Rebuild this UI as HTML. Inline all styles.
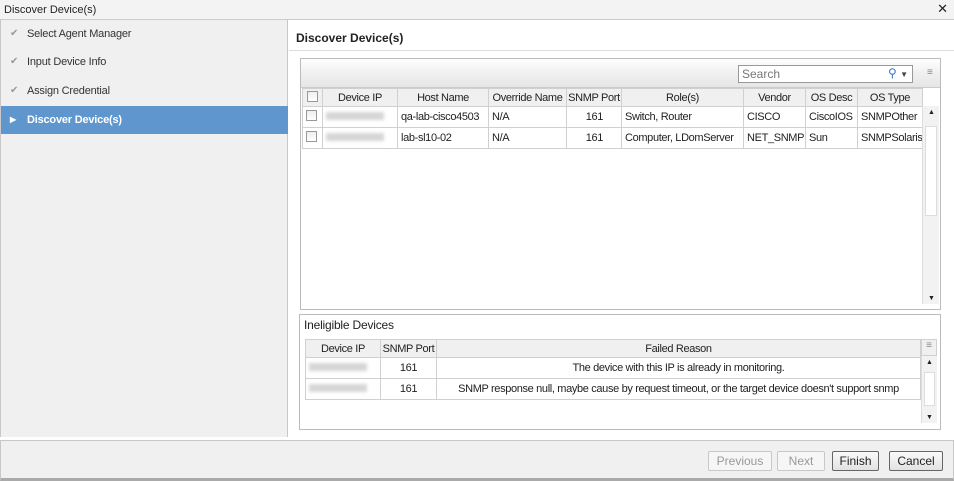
<!DOCTYPE html>
<html><head><style>
*{box-sizing:border-box;margin:0;padding:0}
body{width:954px;height:481px;position:relative;background:#fff;font-family:"Liberation Sans",sans-serif;font-size:11px;color:#222;overflow:hidden}
.a{position:absolute}
.tb{left:0;top:0;width:954px;height:20px;background:#f3f3f3;border-bottom:1px solid #ccc;font-size:11px;padding:4px 0 0 4px}
.left{left:0;top:20px;width:288px;height:417px;background:#f0f0f0;border-right:1px solid #c8c8c8;border-left:1px solid #c8c8c8}
.it{position:absolute;left:0;width:287px;height:28px;line-height:28px;padding-left:26px;color:#333;letter-spacing:-0.2px}
.it .ck{position:absolute;left:9px;color:#999;font-size:10px}
.sel{background:#5e96cd;color:#fff;font-weight:bold}
table{border-collapse:collapse;table-layout:fixed;letter-spacing:-0.35px}
td,th{border:1px solid #d0d0d0;height:21px;padding:0 3px;white-space:nowrap;overflow:hidden;font-weight:normal}
th{background:#f0f0f0;height:18px;text-align:center;padding:0 1px}
.cb{display:inline-block;width:11px;height:11px;border:1px solid #999;background:linear-gradient(#eee,#fff)}
.blur{display:inline-block;width:58px;height:8px;background:#d6d6d6;filter:blur(1.5px)}
.btn{position:absolute;top:451px;height:20px;border:1px solid #999;border-radius:2px;background:linear-gradient(#fafafa,#e2e2e2);text-align:center;line-height:18px;font-size:12px}
.dis{color:#999;border-color:#c8c8c8;background:#f6f6f6}
.sb{position:absolute;background:#f2f2f2;border-left:1px solid #ddd}
</style></head><body>
<div class="a tb">Discover Device(s)<span style="position:absolute;right:6px;top:1px;font-size:13px">✕</span></div>
<div class="a left">
<div class="it" style="top:0"><span class="ck">✔</span>Select Agent Manager</div>
<div class="it" style="top:28px"><span class="ck">✔</span>Input Device Info</div>
<div class="it" style="top:57px"><span class="ck">✔</span>Assign Credential</div>
<div class="it sel" style="top:86px"><span class="ck" style="color:#fff;font-size:8px">▶</span>Discover Device(s)</div>
</div>
<div class="a" style="left:296px;top:31px;font-weight:bold;font-size:12px">Discover Device(s)</div>
<div class="a" style="left:289px;top:50px;width:665px;border-top:1px solid #ddd"></div>
<div class="a" style="left:300px;top:58px;width:641px;height:252px;border:1px solid #bbb"></div>
<div class="a" style="left:301px;top:59px;width:639px;height:29px;background:linear-gradient(#fff,#f0f0f0 50%,#e6e6e6);border-bottom:1px solid #ccc"></div>
<div class="a" style="left:738px;top:65px;width:175px;height:18px;border:1px solid #999;background:#fff;padding:1px 3px;color:#777;font-size:12px">Search<span style="position:absolute;right:4px;top:0;color:#3a78c0">⚲ <span style="color:#444;font-size:8px">▼</span></span></div>
<div class="a" style="left:927px;top:67px;color:#888;font-size:10px">≡</div>
<table class="a" style="left:302px;top:88px;width:620px">
<colgroup><col style="width:20px"><col style="width:75px"><col style="width:91px"><col style="width:78px"><col style="width:55px"><col style="width:122px"><col style="width:62px"><col style="width:52px"><col style="width:65px"></colgroup>
<tr><th><span class="cb"></span></th><th>Device IP</th><th>Host Name</th><th>Override Name</th><th>SNMP Port</th><th>Role(s)</th><th>Vendor</th><th>OS Desc</th><th>OS Type</th></tr>
<tr><td><span class="cb"></span></td><td><span class="blur"></span></td><td>qa-lab-cisco4503</td><td>N/A</td><td style="text-align:right;padding-right:18px">161</td><td>Switch, Router</td><td>CISCO</td><td>CiscoIOS</td><td>SNMPOther</td></tr>
<tr><td><span class="cb"></span></td><td><span class="blur"></span></td><td>lab-sl10-02</td><td>N/A</td><td style="text-align:right;padding-right:18px">161</td><td>Computer, LDomServer</td><td>NET_SNMP</td><td>Sun</td><td>SNMPSolaris</td></tr>
</table>
<div class="sb" style="left:922px;top:106px;width:17px;height:198px"><div style="position:absolute;left:2px;top:20px;width:12px;height:90px;background:#fff;border:1px solid #ddd"></div><span style="position:absolute;left:5px;top:3px;font-size:7px">▲</span><span style="position:absolute;left:5px;bottom:2px;font-size:7px">▼</span></div>
<div class="a" style="left:299px;top:314px;width:642px;height:116px;border:1px solid #bbb"></div>
<div class="a" style="left:304px;top:318px;font-size:12px;letter-spacing:-0.2px">Ineligible Devices</div>
<table class="a" style="left:305px;top:339px;width:616px">
<colgroup><col style="width:75px"><col style="width:56px"><col></colgroup>
<tr><th>Device IP</th><th>SNMP Port</th><th>Failed Reason</th></tr>
<tr><td><span class="blur"></span></td><td style="text-align:center">161</td><td style="text-align:center">The device with this IP is already in monitoring.</td></tr>
<tr><td><span class="blur"></span></td><td style="text-align:center">161</td><td style="text-align:center">SNMP response null, maybe cause by request timeout, or the target device doesn't support snmp</td></tr>
</table>
<div class="a" style="left:921px;top:339px;width:16px;height:17px;background:#f0f0f0;border:1px solid #d0d0d0;color:#888;font-size:10px;text-align:center">≡</div>
<div class="sb" style="left:921px;top:356px;width:16px;height:67px"><div style="position:absolute;left:2px;top:16px;width:11px;height:34px;background:#fff;border:1px solid #ddd"></div><span style="position:absolute;left:4px;top:3px;font-size:7px">▲</span><span style="position:absolute;left:4px;bottom:2px;font-size:7px">▼</span></div>
<div class="a" style="left:0;top:440px;width:954px;height:41px;background:#f0f0f0;border-top:1px solid #c8c8c8;border-bottom:3px solid #aaa;border-left:1px solid #c8c8c8;border-right:1px solid #c8c8c8"></div>
<div class="btn dis" style="left:708px;width:64px">Previous</div>
<div class="btn dis" style="left:777px;width:48px">Next</div>
<div class="btn" style="left:832px;width:47px;border-color:#666">Finish</div>
<div class="btn" style="left:889px;width:54px;border-color:#666">Cancel</div>
</body></html>
